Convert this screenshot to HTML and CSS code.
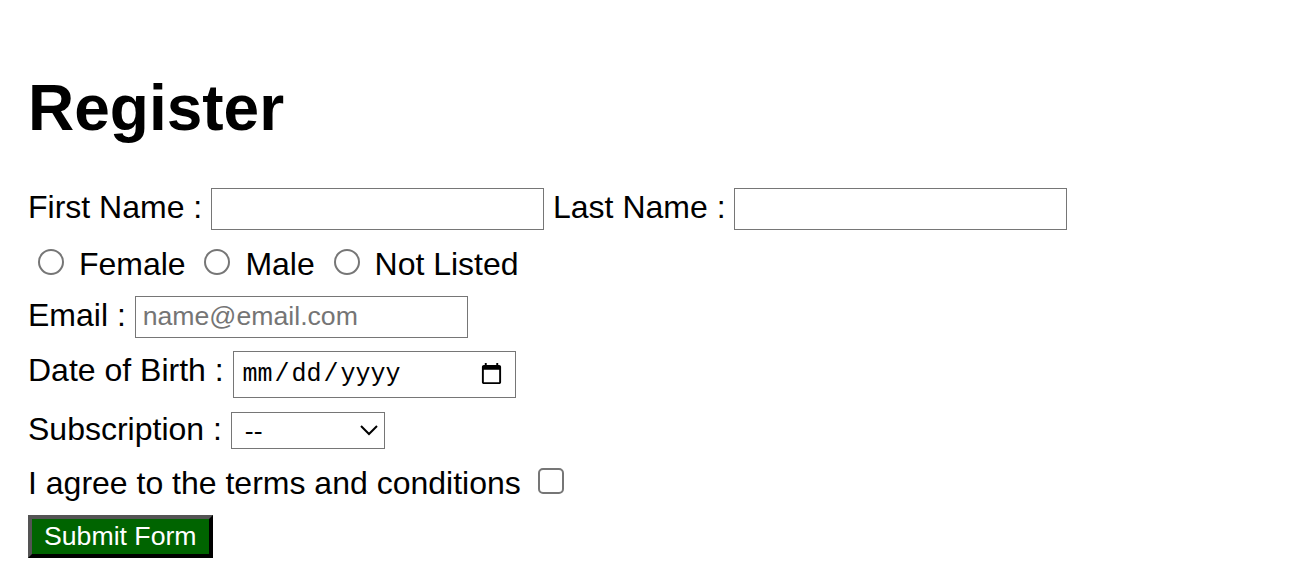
FILE: index.html
```html
<!DOCTYPE html>
<html class="page">
<head>
<meta charset="utf-8">
<title>Register</title>
<link rel="stylesheet" href="styles.css">
</head>
<body class="page-body">
<div class="wrap">
<h1 class="title">Register</h1>
<form class="form">
  <div class="row">
    <label for="fn">First Name :</label>
    <input type="text" id="fn" name="fn" class="text-field">
    <label for="ln">Last Name :</label>
    <input type="text" id="ln" name="ln" class="text-field">
  </div>
  <div class="row">
    <input type="radio" id="f" name="g"> <label for="f">Female</label>
    <input type="radio" id="m" name="g"> <label for="m">Male</label>
    <input type="radio" id="n" name="g"> <label for="n">Not Listed</label>
  </div>
  <div class="row">
    <label for="em">Email :</label>
    <input type="email" id="em" class="text-field" placeholder="name@email.com">
  </div>
  <div class="row">
    <label for="dob">Date of Birth :</label>
    <input type="date" id="dob" class="date-field">
  </div>
  <div class="row">
    <label for="sub">Subscription :</label>
    <select id="sub" class="select-field">
      <option>--</option>
      <option>Monthly</option>
      <option>Annually</option>
    </select>
  </div>
  <div class="row">
    <label for="tc">I agree to the terms and conditions</label>
    <input type="checkbox" id="tc">
  </div>
  <div class="row">
    <button type="submit" class="submit">Submit Form</button>
  </div>
</form>
</div>
</body>
</html>
```
FILE: styles.css
```css
.page {
  zoom: 2;
}
.page-body {
  margin: 8px;
  font-family: "Liberation Sans", Arial, sans-serif;
  font-size: 16px;
}
.wrap {
  padding: 6px 6px 0;
}
.title {
  font-size: 2em;
  margin: 0.67em 0;
}
.row {
  margin-bottom: 6.5px;
}
.form input,
.form select,
.form button {
  font-family: "Liberation Sans", Arial, sans-serif;
}
.text-field {
  box-sizing: border-box;
  width: 166.5px;
  height: 21px;
  border: 0.5px solid #767676;
  padding: 1px 3.5px;
  font-size: 13.333px;
}
.form .date-field {
  box-sizing: border-box;
  width: 141.5px;
  height: 23.5px;
  border: 0.5px solid #767676;
  padding: 1px 3.5px;
  font-family: "Liberation Mono", "DejaVu Sans Mono", monospace;
  font-size: 12.5px;
  background: #fff;
}
.select-field {
  box-sizing: border-box;
  width: 77px;
  height: 18.5px;
  border: 0.5px solid #767676;
  border-radius: 0;
  font-size: 13.333px;
  background-color: #fff;
  padding-left: 2.5px;
}
.submit {
  background-color: darkgreen;
  color: white;
  font-size: 13.333px;
}
```
